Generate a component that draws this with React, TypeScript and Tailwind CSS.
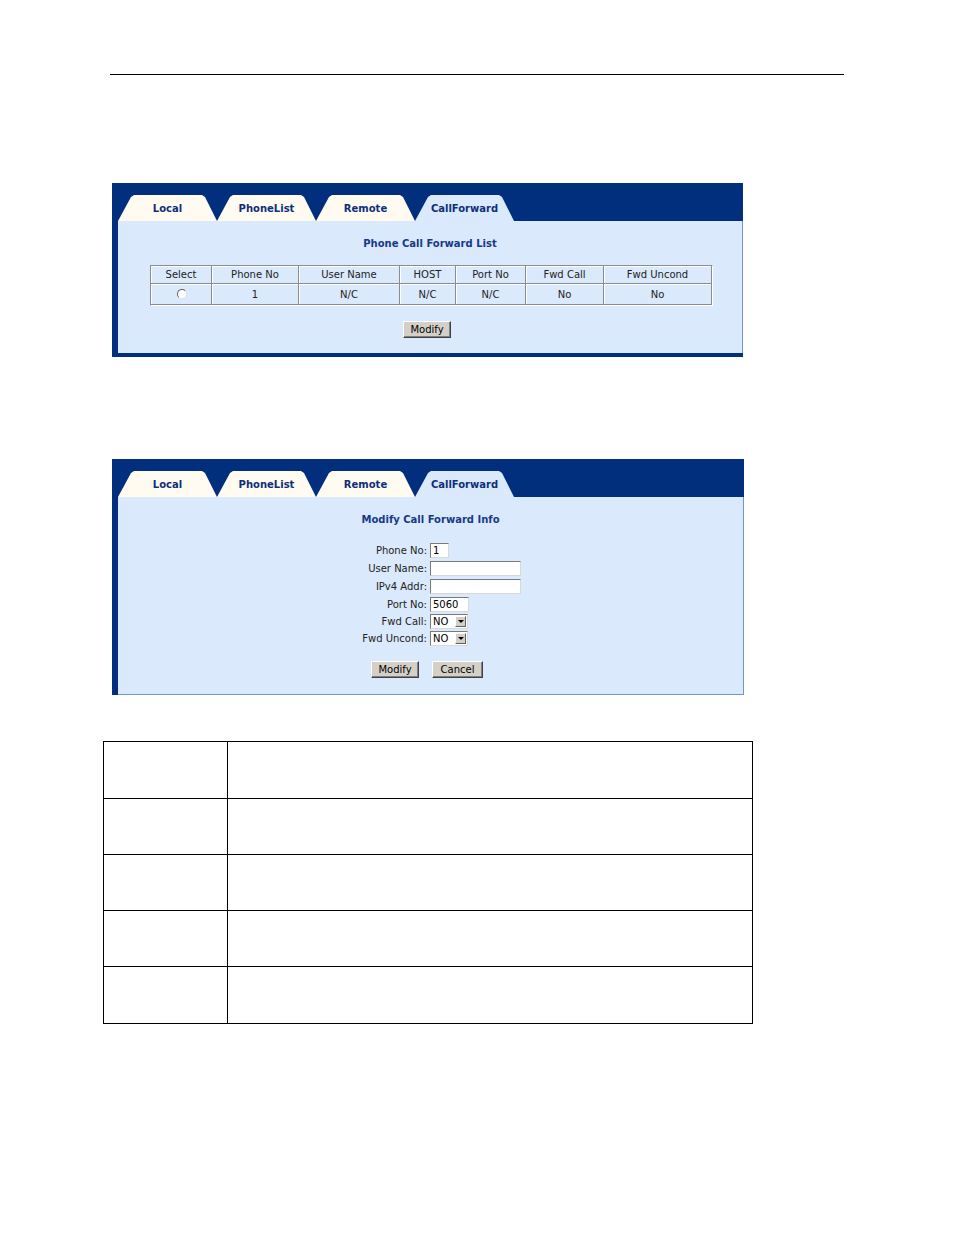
const font = "font-['DejaVu_Sans',Verdana,sans-serif]";

const tabs = ["Local", "PhoneList", "Remote", "CallForward"];

function TabStrip() {
  return (
    <div className="flex h-[26px]">
      {tabs.map((t) => (
        <div
          key={t}
          className={`w-[99px] h-[26px] flex items-center justify-center pt-[1px] text-[10px] font-bold text-[#0e2f7c] [clip-path:polygon(0_100%,13px_2px,16px_0,calc(100%_-_15px)_0,calc(100%_-_12px)_2px,100%_100%)] ${
            t === "CallForward" ? "bg-[#dae9fc]" : "bg-[#fffbf0]"
          }`}
        >
          {t}
        </div>
      ))}
    </div>
  );
}

function Button({ label, w }: { label: string; w: string }) {
  return (
    <div
      className={`${w} h-[17px] flex items-center justify-center bg-[#d4d0c8] border border-t-white border-l-white border-b-[#404040] border-r-[#404040] text-[10px] text-black shadow-[inset_-1px_-1px_0_#808080]`}
    >
      {label}
    </div>
  );
}

const cols = [
  { h: "Select", w: "w-[61px]" },
  { h: "Phone No", w: "w-[87px]" },
  { h: "User Name", w: "w-[101px]" },
  { h: "HOST", w: "w-[56px]" },
  { h: "Port No", w: "w-[70px]" },
  { h: "Fwd Call", w: "w-[78px]" },
  { h: "Fwd Uncond", w: "w-[108px]" },
];
const rowVals = ["", "1", "N/C", "N/C", "N/C", "No", "No"];

function ListTable() {
  return (
    <div className="border-l border-t border-[#8c8c8c] border-r-white border-b-white border-r border-b w-max">
      <div className="flex">
        {cols.map((c) => (
          <div
            key={c.h}
            className={`${c.w} h-[18px] flex items-center justify-center text-[10px] text-[#222] border-r border-b border-r-[#8c8c8c] border-b-[#8c8c8c] shadow-[inset_1px_1px_0_#ffffff]`}
          >
            {c.h}
          </div>
        ))}
      </div>
      <div className="flex">
        {cols.map((c, i) => (
          <div
            key={c.h}
            className={`${c.w} h-[21px] flex items-center justify-center text-[10px] text-[#222] border-r border-b border-r-[#8c8c8c] border-b-[#8c8c8c] shadow-[inset_1px_1px_0_#ffffff]`}
          >
            {i === 0 ? (
              <div className="w-[10px] h-[10px] rounded-full bg-white border border-t-[#606060] border-l-[#606060] border-b-[#e0e0e0] border-r-[#e0e0e0] ml-[1px]" />
            ) : (
              rowVals[i]
            )}
          </div>
        ))}
      </div>
    </div>
  );
}

function Input({ w, value }: { w: string; value?: string }) {
  return (
    <div
      className={`${w} h-[15px] bg-white border border-t-[#7a7a7a] border-l-[#7a7a7a] border-b-[#d8d8d8] border-r-[#d8d8d8] text-[10px] leading-[13px] pl-[2px] text-black`}
    >
      {value}
    </div>
  );
}

function Select() {
  return (
    <div className="w-[38px] h-[15px] bg-white border border-t-[#7a7a7a] border-l-[#7a7a7a] border-b-[#d8d8d8] border-r-[#d8d8d8] flex items-center text-[10px] text-black">
      <span className="pl-[2px] flex-1 leading-[13px]">NO</span>
      <div className="w-[11px] h-[11px] mr-[1px] bg-[#d4d0c8] border border-t-white border-l-white border-b-[#606060] border-r-[#606060] flex items-center justify-center">
        <div className="w-0 h-0 border-l-[3px] border-r-[3px] border-t-[3px] border-l-transparent border-r-transparent border-t-black" />
      </div>
    </div>
  );
}

const formRows: { label: string; field: React.ReactNode; h: string }[] = [
  { label: "Phone No:", field: <Input w="w-[19px]" value="1" />, h: "h-[18px]" },
  { label: "User Name:", field: <Input w="w-[91px]" />, h: "h-[18px]" },
  { label: "IPv4 Addr:", field: <Input w="w-[91px]" />, h: "h-[19px]" },
  { label: "Port No:", field: <Input w="w-[39px]" value="5060" />, h: "h-[17px]" },
  { label: "Fwd Call:", field: <Select />, h: "h-[17px]" },
  { label: "Fwd Uncond:", field: <Select />, h: "h-[17px]" },
];

function Panel({ children, list }: { children: React.ReactNode; list?: boolean }) {
  return (
    <div className={`bg-[#022f7d] pl-[6px] pt-[12px] ${list ? "pb-[4px] w-[631px]" : "w-[632px]"}`}>
      <TabStrip />
      <div className={`bg-[#dae9fc] border-r border-[#6f98cf] ${list ? "" : "border-b"}`}>
        {children}
      </div>
    </div>
  );
}

const rowHeights = ["h-[57px]", "h-[56px]", "h-[56px]", "h-[56px]", "h-[57px]"];

export default function App() {
  return (
    <div className={`w-[954px] min-h-[1235px] bg-white ${font}`}>
      <div className="pt-[74px] pl-[110px]">
        <div className="w-[734px] h-[1px] bg-black" />
      </div>

      <div className="pl-[112px] pt-[108px]">
        <Panel list>
          <div className="h-[132px] flex flex-col items-center">
            <div className="pt-[15px] text-[10px] font-bold text-[#17398a]">
              Phone Call Forward List
            </div>
            <div className="pt-[14px] self-start ml-[32px]">
              <ListTable />
            </div>
            <div className="pt-[15px] mr-[6px]">
              <Button label="Modify" w="w-[48px]" />
            </div>
          </div>
        </Panel>
      </div>

      <div className="pl-[112px] pt-[102px]">
        <Panel>
          <div className="h-[197px] flex flex-col">
            <div className="pt-[15px] text-center text-[10px] font-bold text-[#17398a]">
              Modify Call Forward Info
            </div>
            <div className="pt-[14px] flex flex-col">
              {formRows.map((r) => (
                <div key={r.label} className={`flex items-center ${r.h}`}>
                  <div className="w-[312px] text-right pr-[3px] text-[10px] text-[#222]">{r.label}</div>
                  {r.field}
                </div>
              ))}
            </div>
            <div className="pt-[14px] flex pl-[253px] gap-[13px]">
              <Button label="Modify" w="w-[48px]" />
              <Button label="Cancel" w="w-[51px]" />
            </div>
          </div>
        </Panel>
      </div>

      <div className="pl-[103px] pt-[46px]">
        <div className="w-[650px] border-t border-l border-black">
          {rowHeights.map((h, i) => (
            <div key={i} className={`flex ${h} border-b border-black`}>
              <div className="w-[124px] border-r border-black" />
              <div className="flex-1 border-r border-black" />
            </div>
          ))}
        </div>
      </div>
    </div>
  );
}
